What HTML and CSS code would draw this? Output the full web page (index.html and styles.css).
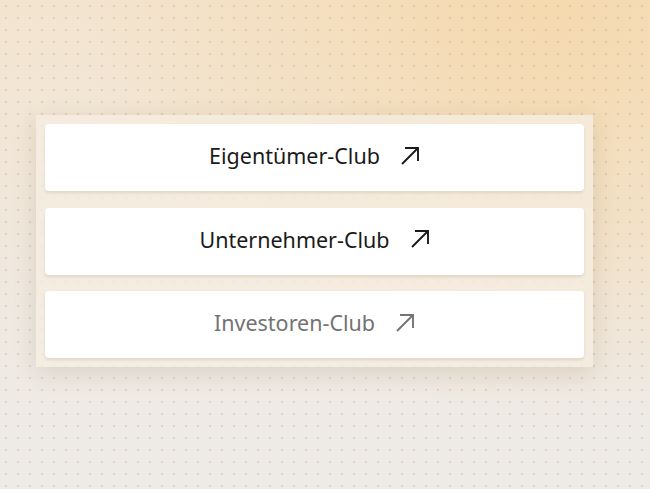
FILE: index.html
```html
<!DOCTYPE html>
<html lang="de">
<head>
    <meta charset="UTF-8">
    <title>Clubs</title>
    <link rel="stylesheet" href="styles.css">
</head>
<body>
<div class="page">
    <div class="club-panel">
        <a class="club-link" href="#">
            <span>Eigentümer-Club</span>
            <svg class="arrow" viewBox="0 0 20 20"><path d="M2 18 L18 2 M5 2 H18 V15"/></svg>
        </a>
        <a class="club-link" href="#">
            <span>Unternehmer-Club</span>
            <svg class="arrow" viewBox="0 0 20 20"><path d="M2 18 L18 2 M5 2 H18 V15"/></svg>
        </a>
        <a class="club-link muted" href="#">
            <span>Investoren-Club</span>
            <svg class="arrow" viewBox="0 0 20 20"><path d="M2 18 L18 2 M5 2 H18 V15"/></svg>
        </a>
    </div>
</div>
</body>
</html>
```
FILE: styles.css
```css
* {
    box-sizing: border-box;
}

html, body {
    margin: 0;
    height: 100%;
}

body {
    font-family: "Noto Sans", "Open Sans", sans-serif;
    background:
        radial-gradient(circle, rgba(150, 130, 110, 0.22) 0.8px, transparent 1.2px) 0 0 / 12px 12px,
        radial-gradient(ellipse at 85% 0%, #f5d9ae 0%, rgba(245, 217, 174, 0) 60%),
        linear-gradient(180deg, #f3e4cf 0%, #efe9e2 70%, #eeebe7 100%);
}

.page {
    height: 100%;
    padding: 115px 57px 0 36px;
}

.club-panel {
    display: flex;
    flex-direction: column;
    gap: 16.5px;
    padding: 9px;
    background: rgba(245, 238, 226, 0.75);
    box-shadow: 0 6px 22px rgba(90, 70, 40, 0.14);
}

.club-link {
    display: flex;
    align-items: center;
    justify-content: center;
    gap: 20px;
    height: 67px;
    padding-bottom: 4px;
    background: #fff;
    border-radius: 4px;
    box-shadow: 0 2px 3px rgba(80, 60, 30, 0.12);
    color: #1a1a1a;
    font-size: 21.5px;
    text-decoration: none;
}

.club-link.muted {
    color: #737373;
}

.arrow {
    width: 20px;
    height: 20px;
    fill: none;
    stroke: currentColor;
    stroke-width: 1.9;
}
```
